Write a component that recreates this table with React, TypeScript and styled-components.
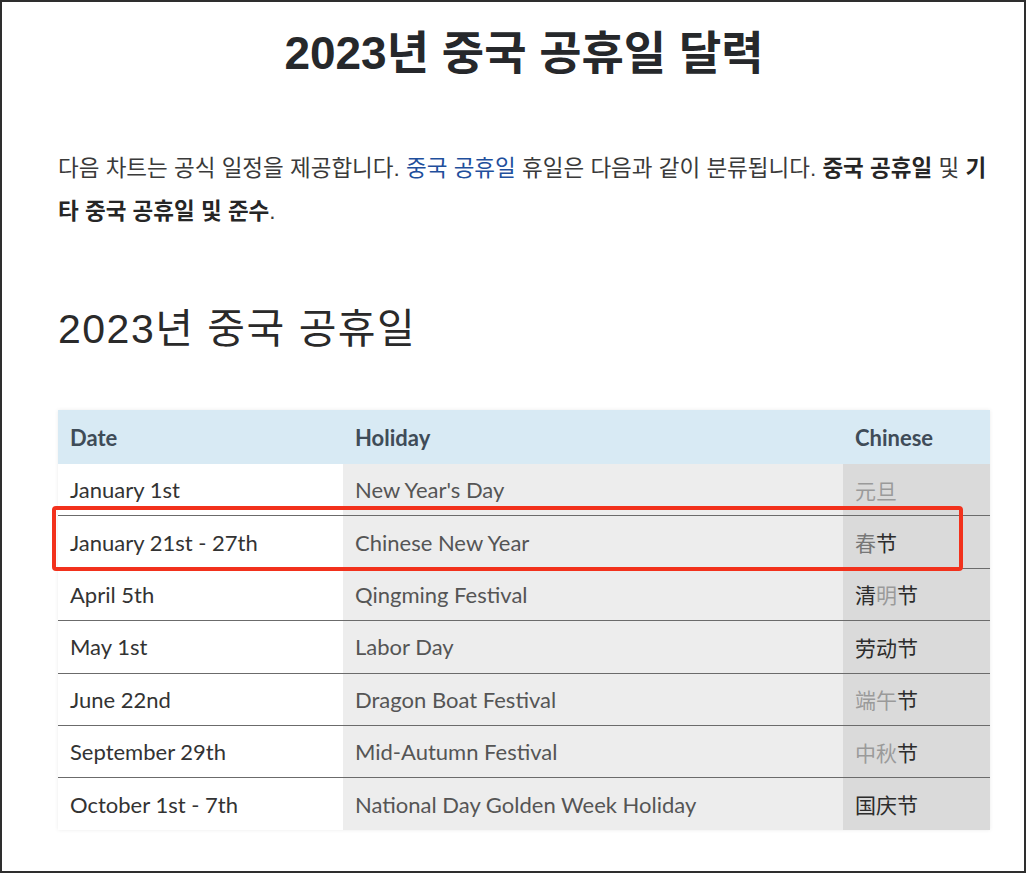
import styled, { createGlobalStyle } from "styled-components";

const GlobalStyle = createGlobalStyle`
  body {
    margin: 0;
    background: #fff;
    font-family: "Liberation Sans", "Noto Sans CJK KR", sans-serif;
  }
`;

const Frame = styled.div`
  width: 1026px;
  height: 873px;
  box-sizing: border-box;
  border: 2px solid #2e2e2e;
  padding: 0 34px 0 56px;
  overflow: hidden;
`;

const Title = styled.h1`
  margin: 24px 0 0;
  text-align: center;
  font-size: 46px;
  line-height: 55px;
  font-weight: 700;
  color: #26282b;
`;

const Intro = styled.p`
  margin: 66px 0 0;
  font-size: 22.5px;
  line-height: 43px;
  color: #3a3a3a;
  a {
    color: #1f4f9c;
    text-decoration: none;
  }
  b {
    color: #262626;
  }
`;

const SubTitle = styled.h2`
  margin: 72px 0 0;
  font-size: 41px;
  line-height: 48px;
  letter-spacing: 1.5px;
  font-weight: 400;
  color: #2a2a2a;
`;

const TableWrap = styled.div`
  position: relative;
  margin-top: 57px;
  box-shadow: 0 0 4px rgba(0, 0, 0, 0.08);
`;

const Table = styled.table`
  width: 100%;
  table-layout: fixed;
  border-collapse: collapse;
  font-family: Lato, "Noto Sans CJK SC", sans-serif;
  font-size: 22px;
`;

const Head = styled.th<{ $w: number }>`
  box-sizing: border-box;
  width: ${p => p.$w}px;
  height: 54px;
  padding: 0 12px;
  text-align: left;
  font-weight: 700;
  color: #3f4c58;
  background: #d8eaf4;
`;

const Row = styled.tr`
  & + & td {
    border-top: 1px solid #6b6b6b;
  }
`;

const Cell = styled.td<{ $tone: "date" | "name" | "zh" }>`
  height: 51.4px;
  padding: 0 12px;
  white-space: nowrap;
  color: ${p => (p.$tone === "date" ? "#333" : "#555")};
  background: ${p =>
    p.$tone === "date" ? "#fff" : p.$tone === "name" ? "#ededed" : "#dadada"};
  font-family: ${p =>
    p.$tone === "zh" ? '"Noto Sans CJK SC", sans-serif' : "inherit"};
  font-size: ${p => (p.$tone === "zh" ? "21px" : "inherit")};
`;

const Faint = styled.span<{ $light?: boolean }>`
  color: ${p => (p.$light ? "#9a9a9a" : "#777")};
`;

const Strong = styled.span`
  color: #2c2c2c;
`;

const Highlight = styled.div`
  position: absolute;
  left: -6px;
  top: 96px;
  width: 911px;
  height: 65px;
  box-sizing: border-box;
  border: 4px solid #f2311c;
  border-radius: 4px;
  pointer-events: none;
`;

const holidays = [
  { date: "January 1st", name: "New Year's Day", zh: <Faint $light>元旦</Faint> },
  { date: "January 21st - 27th", name: "Chinese New Year", zh: <><Faint>春</Faint><Strong>节</Strong></> },
  { date: "April 5th", name: "Qingming Festival", zh: <><Strong>清</Strong><Faint $light>明</Faint><Strong>节</Strong></> },
  { date: "May 1st", name: "Labor Day", zh: <Strong>劳动节</Strong> },
  { date: "June 22nd", name: "Dragon Boat Festival", zh: <><Faint $light>端午</Faint><Strong>节</Strong></> },
  { date: "September 29th", name: "Mid-Autumn Festival", zh: <><Faint $light>中秋</Faint><Strong>节</Strong></> },
  { date: "October 1st - 7th", name: "National Day Golden Week Holiday", zh: <Strong>国庆节</Strong> },
];

export default function App() {
  return (
    <>
      <GlobalStyle />
      <Frame>
        <Title>2023년 중국 공휴일 달력</Title>
        <Intro>
          다음 차트는 공식 일정을 제공합니다. <a href="#">중국 공휴일</a> 휴일은 다음과 같이 분류됩니다.{" "}
          <b>중국 공휴일</b> 및 <b>기타 중국 공휴일 및 준수</b>.
        </Intro>
        <SubTitle>2023년 중국 공휴일</SubTitle>
        <TableWrap>
          <Table>
            <thead>
              <tr>
                <Head $w={285}>Date</Head>
                <Head $w={500}>Holiday</Head>
                <Head $w={147}>Chinese</Head>
              </tr>
            </thead>
            <tbody>
              {holidays.map(h => (
                <Row key={h.date}>
                  <Cell $tone="date">{h.date}</Cell>
                  <Cell $tone="name">{h.name}</Cell>
                  <Cell $tone="zh">{h.zh}</Cell>
                </Row>
              ))}
            </tbody>
          </Table>
          <Highlight />
        </TableWrap>
      </Frame>
    </>
  );
}
